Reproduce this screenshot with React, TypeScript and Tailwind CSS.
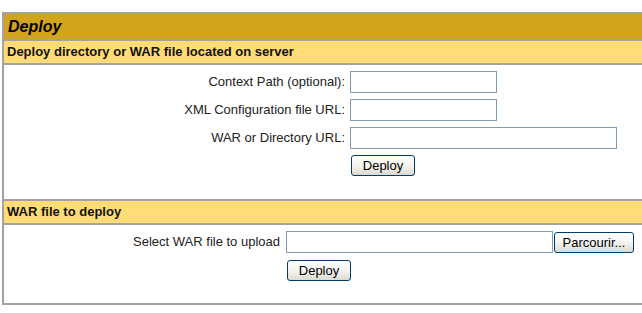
import React from 'react';

const font = { fontFamily: '"Liberation Sans", Arial, sans-serif' };

const XpButton: React.FC<{ label: string; width: string }> = ({ label, width }) => (
  <button
    type="button"
    className={`${width} flex h-[21px] items-center justify-center rounded-[3px] border border-[#003c74] bg-gradient-to-b from-[#ffffff] via-[#f4f4f0] to-[#dcdad0] text-[13px] leading-none text-black`}
  >
    {label}
  </button>
);

const FieldRow: React.FC<{ label: string; inputWidth: string }> = ({ label, inputWidth }) => (
  <div className="flex h-[22px] items-center">
    <div className="w-[346px] pr-[5px] text-right text-[13px] text-[#222]">{label}</div>
    <div className={`${inputWidth} h-[22px] border border-[#7f9db9] bg-white`} />
  </div>
);

export default function App() {
  return (
    <div className="h-[313px] w-[642px] overflow-hidden bg-white" style={font}>
      <div className="ml-[2px] mt-[12px] w-[700px] border-b-2 border-l-2 border-t-2 border-[#a3a3a3]">
        {/* title bar */}
        <div className="flex h-[25px] items-center bg-[#d2a41c] pl-[4px] text-[16px] font-bold italic text-black">
          Deploy
        </div>
        <div className="h-[2px] bg-[#a3a3a3]" />
        <div className="flex h-[22px] items-center bg-[#ffdc75] pl-[3px] text-[13px] font-bold text-[#111]">
          Deploy directory or WAR file located on server
        </div>
        <div className="h-[2px] bg-[#a3a3a3]" />

        {/* server side deploy */}
        <div className="flex h-[134px] flex-col gap-[6px] pt-[6px]">
          <FieldRow label="Context Path (optional):" inputWidth="w-[147px]" />
          <FieldRow label="XML Configuration file URL:" inputWidth="w-[147px]" />
          <FieldRow label="WAR or Directory URL:" inputWidth="w-[267px]" />
          <div className="flex pl-[347px]">
            <XpButton label="Deploy" width="w-[64px]" />
          </div>
        </div>

        <div className="h-[2px] bg-[#a3a3a3]" />
        <div className="flex h-[22px] items-center bg-[#ffdc75] pl-[3px] text-[13px] font-bold text-[#111]">
          WAR file to deploy
        </div>
        <div className="h-[2px] bg-[#a3a3a3]" />

        {/* upload */}
        <div className="flex h-[78px] flex-col gap-[7px] pt-[6px]">
          <div className="flex h-[22px] items-center">
            <div className="w-[282px] pr-[6px] text-right text-[13px] text-[#222]">Select WAR file to upload</div>
            <div className="h-[22px] w-[267px] border border-[#7f9db9] bg-white" />
            <div className="ml-[1px] flex">
              <XpButton label="Parcourir..." width="w-[80px]" />
            </div>
          </div>
          <div className="flex pl-[283px]">
            <XpButton label="Deploy" width="w-[64px]" />
          </div>
        </div>
      </div>
    </div>
  );
}
